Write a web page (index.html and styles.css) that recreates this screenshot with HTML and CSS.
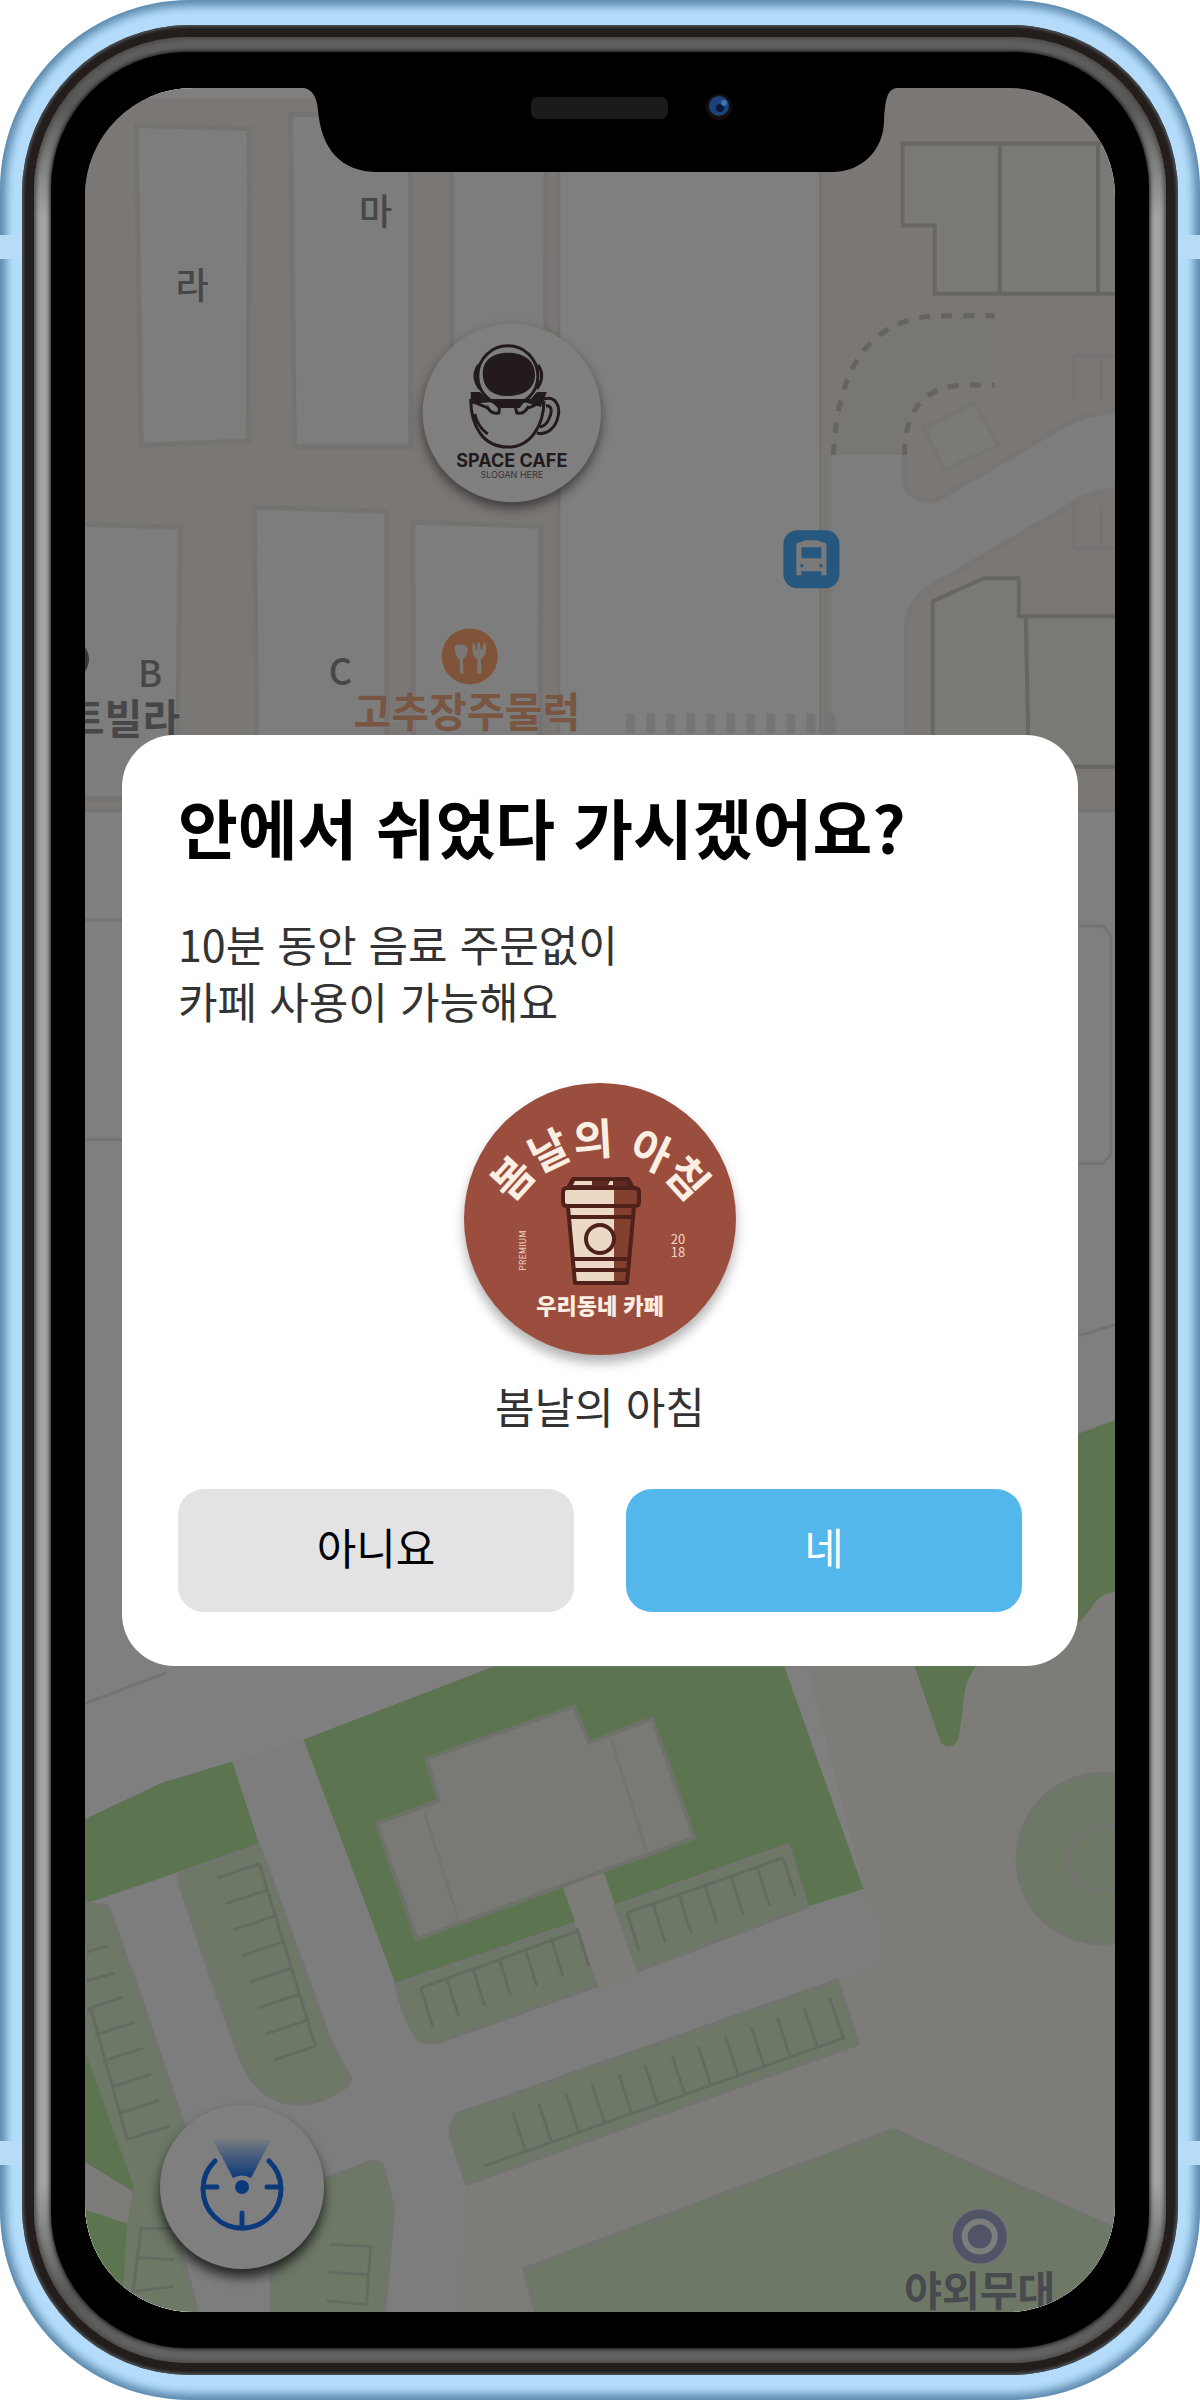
FILE: index.html
```
<!DOCTYPE html>
<html lang="ko">

<head>
	<meta charset="UTF-8">
	<title>우리동네 카페</title>
	<link rel="stylesheet" href="styles.css">
</head>

<body>
	<div class="phone">
		<span class="antenna antenna-top"></span>
		<span class="antenna antenna-bottom"></span>
		<div class="bezel">
			<div class="rim">
				<div class="glass">
					<main class="screen">

						<svg class="map" viewBox="86 88 1028 2225" preserveAspectRatio="xMidYMid slice">
							<rect class="ground" x="86" y="88" width="1028" height="1600" />
							<rect class="plaza" x="86" y="1420" width="1028" height="893" />

							<!-- roads, upper half -->
							<path class="road" d="M86 88H312V101H86ZM559 88H820V830H559ZM86 812H1114V1420L86 1703Z" />
							<path class="edge" d="M820 88V735M559 88V735M86 812H1114M86 921H130M86 1140H130M1078 927H1102L1110 936V1155L1102 1164H1078M1078 1336L1114 1325" />
							<path class="lot" d="M832 456H904V480C906 497 918 504 935 502L1063 427Q1085 415 1114 413V492Q1088 494 1071 507L937 585Q906 602 906 632V812H832Z" />
							<path class="edge wide" d="M904 456V480C906 497 918 504 935 502L1063 427Q1085 415 1114 413M1114 492Q1088 494 1071 507L937 585Q906 602 906 632V812M826 456V735" />

							<!-- buildings -->
							<g class="block">
								<path d="M137 128L250 131L249 443L142 447Z" />
								<path d="M291 117H411V449H295Z" />
								<path d="M452 110H546V447H452Z" />
								<path d="M80 526L181 529L178 800H80Z" />
								<path d="M255 509L387 513V800H258Z" />
								<path d="M413 524L541 528L540 800H414Z" />
							</g>
							<g class="tower">
								<path d="M902 146H1130V296H934V228H902Z" />
								<path d="M999 146V296M1097 146V296" />
								<path d="M932 603L983 580H1018V618H1130V768H932Z" />
								<path d="M1025 618L1028 768" />
							</g>
							<path class="arch" d="M833 457Q839 318 942 318H994V387H965Q904 390 904 457Z" />
							<path class="dash" d="M833 457Q839 318 942 318H994" />
							<path class="dash" d="M904 457Q904 388 965 387H994" />
							<path class="shed" d="M923 430L973 405L998 447L944 472Z" />
							<path class="edge" d="M1114 358H1073V401M1100 358V401M1073 508V550H1114M1100 508V550" />
							<path class="crosswalk" d="M626 725H844" />

							<!-- park and streets, lower half -->
							<path class="road" d="M86 1703L168 1672L200 1640H800L863 1888L881 1930Q884 1960 868 1967L467 2120V2183Q465 2250 461 2313H86Z" />
							<path class="lot" d="M233 1761L304 1739L396 1983L573 1923L863 1888L881 1930Q884 1960 868 1967L467 2120V2183Q465 2250 461 2313H86V1902Z" />
							<path class="edge" d="M86 1703L168 1672" />
							<path class="grass" d="M86 1818L163 1782L233 1761L260 1844L86 1903Z" />
							<path class="lawn" d="M86 1902L109 1905L143 2000L186 2128L170 2200L199 2313H86Z" />
							<path class="grass" d="M86 2050L134 2183V2190L86 2163ZM86 2205L128 2222L124 2290L86 2270Z" />
							<path class="plaza" d="M86 2161L134 2190L128 2222L86 2208Z" />
							<path class="lawn" d="M260 1844L331 2040L350 2075Q353 2081 346 2086Q322 2103 298 2103Q258 2102 240 2055L220 2000L180 1882V1872Z" />
							<path class="lawn" d="M331 2175L369 2161Q381 2158 384 2166L394 2207L385 2313H272V2200Z" />
							<path class="grass" d="M304 1739L494 1666H784L863 1888L807 1906L615 1905L573 1923L396 1983Z" />
							<path class="plaza" d="M563 1887L603 1870L640 1975L599 1987Z" />
							<path class="hall" d="M427 1758L574 1706L589 1742L652 1718L694 1837L417 1938L377 1823L439 1800Z" />
							<path class="edge" d="M425 1813L459 1920M611 1737L646 1850" />
							<path class="lawn" d="M396 1983L573 1923L597 1985L440 2041Q424 2044 417 2037Q404 2018 396 1983Z" />
							<path class="lawn" d="M615 1905L788 1844L807 1906L638 1970Z" />
							<path class="plaza" d="M467 2183L858 2043L1114 2160V2313H461Z" />
							<path class="lawn" d="M459 2112L837 1979L858 2043L467 2183L451 2135Q449 2120 459 2112Z" />
							<path class="lawn" d="M524 2267L893 2128L1114 2227V2313H536Z" />
							<circle class="lawn" cx="1101" cy="1858" r="85" />
							<circle class="edge" cx="1101" cy="1858" r="33" />
							<path class="grass" d="M1050 1444L1114 1420V1592Q1100 1592 1090 1608Q1078 1626 1050 1640L975 1666Q964 1680 963 1700L958 1738Q950 1752 940 1742L914 1666L900 1600Z" />

							<!-- parking bays -->
							<g class="bays">
								<path d="M260 1863L316 2045m-56 -182l-42 14m50 12l-42 14m50 12l-42 14m50 12l-42 14m50 12l-42 14m50 12l-42 14m50 12l-42 14m50 12l-42 14" />
								<path d="M92 2008L128 2138l42 -13m-50 -13l40 -13m-48 -13l40 -13m-48 -13l40 -13m-48 -13l40 -13m-48 -13l36 -12M88 1980l27 -8M88 1951l21 -6" />
								<path d="M421 1987L578 1930m-157 57l12 38m14 -48l12 38m14 -48l12 38m14 -48l12 38m14 -48l12 38m14 -48l12 38m14 -48l12 38" />
								<path d="M627 1912L783 1857m-156 55l12 38m14 -47l12 38m14 -47l12 38m14 -47l12 38m14 -47l12 38m14 -47l12 38m14 -47l12 38" />
								<path d="M484 2165L843 2037l-14 -40m-12 50l-13 -40m-14 50l-13 -40m-13 49l-13 -40m-13 49l-13 -40m-14 50l-13 -40m-13 49l-13 -40m-14 50l-13 -40m-13 49l-13 -40m-14 50l-13 -40m-13 49l-13 -40m-14 50l-13 -40m-13 49l-13 -40" />
								<path d="M331 2243l40 2l-4 58l-40 -4M329 2271l40 2M180 2227h-38l-8 63l40 -5M137 2256l38 2" />
							</g>

							<!-- bus stop -->
							<rect class="bus" x="783" y="532" width="56" height="58" rx="14" />
							<path class="bus-shape" d="M796 547Q796 544 800 544L805 542H817L822 544Q826 544 826 547V577H821V573H801V577H796ZM801 549V560H821V549Z" />
							<path class="bus-light" d="M800 566h3v3h-3zM819 566h3v3h-3z" />

							<!-- restaurant -->
							<circle class="food" cx="470" cy="658" r="28" />
							<path class="food-shape" d="M455 649Q455 646 461 646Q468 646 468 651Q467 659 463 661L464 675H460L460 661Q455 658 455 649ZM473 645H475L476 651H477L478 644H480L481 651H482L484 645H486Q488 657 481 661L482 675H477L478 661Q471 657 473 645Z" />
							<text class="place place-food" x="354" y="728">고추장주물럭</text>

							<circle class="stage" cx="979" cy="2235" r="28" />
							<circle class="stage-ring" cx="979" cy="2235" r="15" />
							<text class="place place-stage" x="979" y="2304">야외무대</text>

							<circle class="stop" cx="70" cy="661" r="20" />
							<text class="place place-villa" x="181" y="735">트빌라</text>
							<text class="tag" x="193" y="301">라</text>
							<text class="tag" x="376" y="227">마</text>
							<text class="tag" x="151" y="689">B</text>
							<text class="tag" x="341" y="687">C</text>

							<!-- space cafe marker -->
							<g class="marker">
								<circle class="marker-base" cx="512" cy="415" r="89" />
								<path class="ink" d="M471 394H480L487 401H531L537 394H547L541 409L524 404L520 410H498L492 404L471 406Z" />
								<circle class="line" cx="508" cy="378" r="30" />
								<path class="ink" d="M483 377C482 362 494 355 508 355C523 355 536 362 535 379C534 392 522 398 508 398C494 398 484 392 483 377Z" />
								<path class="line" d="M479 367Q471 378 480 391M538 367Q546 378 537 391" />
								<path class="line" d="M471 401C471 429 484 449 508 449C531 449 544 427 544 403M471 403L488 410M544 403L529 410M544 401C555 398 561 407 558 419C556 429 547 438 537 435M546 408C553 407 552 415 549 421Q546 428 540 429M475 416Q478 429 488 436" />
								<path class="line" d="M487 408Q491 417 499 415L500 407H515L517 415Q524 417 529 408" />
								<text class="marker-name" x="512" y="469">SPACE CAFE</text>
								<text class="marker-slogan" x="512" y="480">SLOGAN HERE</text>
							</g>
						</svg>

						<button class="locate" type="button" aria-label="내 위치">
							<svg viewBox="0 0 164 164">
								<defs>
									<linearGradient id="beam" x1="0" y1="0" x2="0" y2="1">
										<stop class="beam-far" offset="0" />
										<stop class="beam-near" offset="1" />
									</linearGradient>
								</defs>
								<path class="beam" d="M53 35H111L91 73Q82 68 73 73Z" />
								<path class="aim" d="M55 56A39 39 0 1 0 109 56M44 82H57M107 82H120M82 108V121" />
								<circle class="aim-dot" cx="82" cy="82" r="7" />
							</svg>
						</button>

						<div class="dim">
							<section class="modal" role="dialog" aria-labelledby="modal-title">
								<h1 id="modal-title">안에서 쉬었다 가시겠어요?</h1>
								<p class="modal-text">10분 동안 음료 주문없이<br>카페 사용이 가능해요</p>
								<figure class="cafe">
									<svg class="cafe-logo" viewBox="0 0 272 272">
										<defs>
											<path id="arc" d="M34 174A102 102 0 0 1 238 174" />
										</defs>
										<text class="logo-title"><textPath href="#arc" startOffset="50%">봄날의 아침</textPath></text>
										<path class="cup-dark" d="M105 104L108 95H164L169 104Z" />
										<path class="cup-light" d="M111 98H128V102H109ZM146 98H149V102H144Z" />
										<rect class="cup-light" x="99" y="105" width="75" height="18" rx="4" />
										<path class="cup-shade" d="M150 105H171Q175 105 175 109V119Q175 123 171 123H150Z" />
										<path class="cup-light" d="M104 124H170L163 200H111Z" />
										<path class="cup-shade" d="M150 124H170L163 200H150Z" />
										<path class="cup-line" d="M103 105H171Q175 105 175 109V119Q175 123 171 123H103Q99 123 99 119V109Q99 105 103 105ZM104 105L109 96H164L169 105M104 124L111 200H163L170 124M105 134H169M109 176H165M110 187H164" />
										<circle class="cup-line cup-badge" cx="136" cy="156" r="14" />
										<text class="logo-side" transform="translate(62 188) rotate(-90)">PREMIUM</text>
										<text class="logo-year" x="214" y="161">20</text>
										<text class="logo-year" x="214" y="174">18</text>
										<text class="logo-sub" x="136" y="231">우리동네 카페</text>
									</svg>
									<figcaption>봄날의 아침</figcaption>
								</figure>
								<div class="buttons">
									<button class="btn btn-no" type="button">아니요</button>
									<button class="btn btn-yes" type="button">네</button>
								</div>
							</section>
						</div>

						<svg class="notch" viewBox="0 0 592 84">
							<path d="M0 0Q12 2 14 22C17 60 36 84 74 84H528C558 84 579 62 580 34C581 12 583 2 592 0Z" />
							<rect class="speaker" x="227" y="9" width="137" height="22" rx="7" />
							<circle class="lens" cx="415" cy="19" r="13" />
							<circle class="lens-blue" cx="415" cy="18" r="10" />
							<circle class="lens-core" cx="416" cy="20" r="4" />
							<circle class="lens-glow" cx="420" cy="15" r="3" />
						</svg>
					</main>
				</div>
			</div>
		</div>
	</div>
</body>

</html>
```

FILE: styles.css
```
* {
	box-sizing: border-box;
}

body {
	margin: 0;
	background-color: white;
	font-family: "Noto Sans CJK KR", "Noto Sans", sans-serif;
}

/* phone body */
.phone {
	position: relative;
	display: flex;
	min-height: 100vh;
	padding: 25px 22px;
	border-radius: 190px;
	background-color: #b4dcfa;
	box-shadow: inset 0 0 8px 6px #5a87ab;
}

.antenna {
	position: absolute;
	left: 0;
	right: 0;
	height: 24px;
	background-color: #b6dcf8;
}

.antenna-top {
	top: 235px;
}

.antenna-bottom {
	bottom: 235px;
}

.bezel {
	position: relative;
	flex: 1;
	display: flex;
	padding: 12px;
	border-radius: 168px;
	background-color: #231d1b;
	box-shadow: inset 0 0 3px 2px #4c5258;
}

.rim {
	flex: 1;
	display: flex;
	padding: 15px 17px;
	border-radius: 154px;
	background: linear-gradient(#606060, #5a5a5a 70px, #a3a3a3 180px, #a3a3a3 calc(100% - 180px), #5a5a5a calc(100% - 70px), #646464);
	box-shadow: inset 0 0 4px 2px #4a4846;
}

.glass {
	flex: 1;
	display: flex;
	padding: 36px 34px;
	border-radius: 136px;
	background-color: black;
	box-shadow: 0 0 4px 1px #111;
}

.screen {
	position: relative;
	flex: 1;
	display: flex;
	border-radius: 108px;
	overflow: hidden;
}

.notch {
	position: absolute;
	top: 0;
	left: 50%;
	width: 592px;
	margin-left: -296px;
}

.speaker {
	fill: #1b1b1b;
}

.lens {
	fill: #140e0e;
}

.lens-blue {
	fill: #1c427a;
}

.lens-core {
	fill: #0c1a38;
}

.lens-glow {
	fill: #3d75b5;
}

/* map */
.map {
	position: absolute;
	width: 100%;
	height: 100%;
}

.ground {
	fill: #f6eeea;
}

.plaza {
	fill: #fcf8f2;
}

.road {
	fill: #ffffff;
}

.lot {
	fill: #fafafa;
}

.edge {
	fill: none;
	stroke: #e6e6e2;
	stroke-width: 3;
}

.wide {
	stroke: #efece8;
	stroke-width: 6;
}

.block {
	fill: #fafafa;
	stroke: #e6e7e2;
	stroke-width: 5;
}

.tower {
	fill: #f4f2ea;
	stroke: #ceccc2;
	stroke-width: 4;
}

.arch {
	fill: #f0eee6;
}

.dash {
	fill: none;
	stroke: #cac8c0;
	stroke-width: 5;
	stroke-dasharray: 11 11;
}

.shed {
	fill: #f6f4ee;
	stroke: #eeeae4;
	stroke-width: 4;
}

.crosswalk {
	stroke: #ebebeb;
	stroke-width: 20;
	stroke-dasharray: 9 11;
}

.grass {
	fill: #bbe9a3;
}

.lawn {
	fill: #daf1ce;
	stroke: #e4e8de;
	stroke-width: 3;
}

.hall {
	fill: #f2f5ea;
	stroke: #dfe4d6;
	stroke-width: 4;
}

.bays {
	fill: none;
	stroke: #c9d6c0;
	stroke-width: 3;
}

.bus {
	fill: #4cb0ff;
}

.bus-shape {
	fill: #f4f4f4;
	fill-rule: evenodd;
}

.bus-light {
	fill: #4cb0ff;
}

.food {
	fill: #ffa870;
}

.food-shape {
	fill: #f4eee8;
}

.place {
	font-size: 41px;
	font-weight: 700;
	paint-order: stroke;
	stroke: #fafafa;
	stroke-width: 2px;
}

.place-food {
	fill: #f0ac84;
}

.place-stage {
	fill: #8e949c;
	text-anchor: middle;
	stroke: #daf1ce;
}

.place-villa {
	fill: #8e8e8e;
	text-anchor: end;
}

.tag {
	font-size: 36px;
	font-weight: 500;
	fill: #8e8e8e;
	text-anchor: middle;
}

.stop {
	fill: #707070;
}

.stage {
	fill: #a0a8cc;
	stroke: #e8eae4;
	stroke-width: 2;
}

.stage-ring {
	fill: #a0a8cc;
	stroke: #fafafa;
	stroke-width: 6;
}

.marker-base {
	fill: white;
	filter: drop-shadow(0 6px 6px rgba(0, 0, 0, 0.5));
}

.ink {
	fill: #443438;
}

.line {
	fill: none;
	stroke: #443438;
	stroke-width: 3;
}

.marker-name {
	font-family: Inter, sans-serif;
	font-size: 18px;
	font-weight: 700;
	fill: #443438;
	text-anchor: middle;
}

.marker-slogan {
	font-family: Inter, sans-serif;
	font-size: 9px;
	fill: #706468;
	text-anchor: middle;
}

.locate {
	position: absolute;
	left: 75px;
	bottom: 43px;
	width: 164px;
	height: 164px;
	padding: 0;
	border: none;
	border-radius: 50%;
	background-color: white;
	box-shadow: 0 8px 12px rgba(0, 0, 0, 0.7);
	cursor: pointer;
}

.locate svg {
	display: block;
}

.beam {
	fill: url(#beam);
}

.beam-far {
	stop-color: #1874f4;
	stop-opacity: 0.1;
}

.beam-near {
	stop-color: #1874f4;
}

.aim {
	fill: none;
	stroke: #1474f8;
	stroke-width: 5;
	stroke-linecap: round;
}

.aim-dot {
	fill: #1474f8;
}

/* modal */
.dim {
	position: relative;
	flex: 1;
	display: flex;
	align-items: center;
	padding: 0 37px;
	background-color: rgba(0, 0, 0, 0.5);
}

.modal {
	flex: 1;
	padding: 52px 56px 54px;
	border-radius: 52px;
	background-color: white;
}

h1 {
	margin: 0;
	font-size: 65px;
	font-weight: 700;
	line-height: 78px;
	color: black;
}

.modal-text {
	margin: 50px 0 54px;
	font-size: 43px;
	line-height: 57px;
	color: #333;
}

.cafe {
	display: flex;
	flex-direction: column;
	align-items: center;
	gap: 22px;
	margin: 0 0 56px;
}

.cafe-logo {
	width: 272px;
	height: 272px;
	border-radius: 50%;
	background-color: #9c4e3e;
	box-shadow: 0 8px 12px rgba(0, 0, 0, 0.3);
}

figcaption {
	font-size: 43px;
	line-height: 56px;
	color: #333;
}

.logo-title {
	font-size: 43px;
	font-weight: 700;
	fill: #fbeee2;
	text-anchor: middle;
}

.logo-sub {
	font-size: 22px;
	font-weight: 900;
	fill: #fbeee2;
	text-anchor: middle;
}

.logo-year {
	font-size: 13px;
	fill: #efd5c6;
	text-anchor: middle;
}

.logo-side {
	font-size: 9px;
	fill: #efd5c6;
}

.cup-light {
	fill: #ecd9c5;
}

.cup-shade {
	fill: #84402f;
}

.cup-dark {
	fill: #5e2a22;
}

.cup-line {
	fill: none;
	stroke: #4e221b;
	stroke-width: 4;
	stroke-linejoin: round;
}

.cup-badge {
	fill: #ecd9c5;
}

.buttons {
	display: flex;
	gap: 52px;
}

.btn {
	flex: 1;
	padding: 28px 0 36px;
	border: none;
	border-radius: 26px;
	font-family: inherit;
	font-size: 43px;
	line-height: 59px;
	cursor: pointer;
}

.btn-no {
	background-color: #e3e3e3;
	color: black;
}

.btn-yes {
	background-color: #53b7eb;
	color: white;
}
```
